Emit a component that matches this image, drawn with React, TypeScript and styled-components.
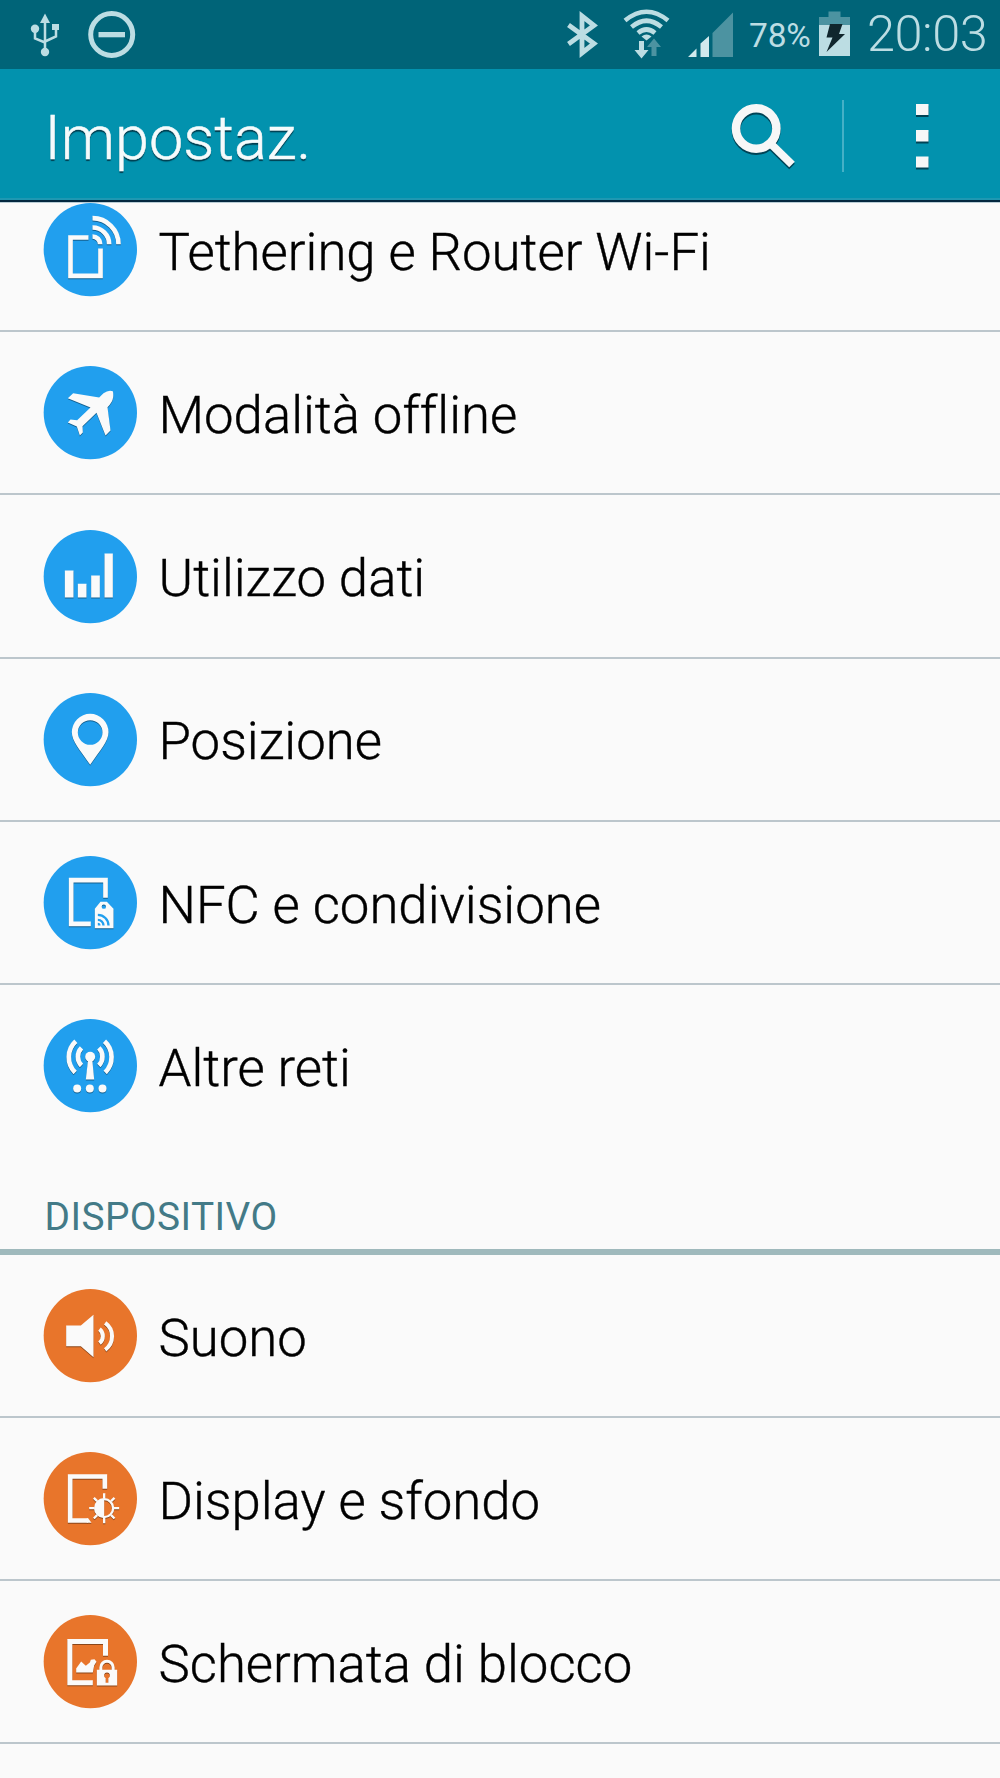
import React from "react";
import styled, { createGlobalStyle } from "styled-components";

const GlobalStyle = createGlobalStyle`
  html, body { margin: 0; padding: 0; background: #fafafa; }
  * { box-sizing: border-box; }
`;

const BLUE = "#219fee";
const ORANGE = "#e8752b";
const STATUS_ICON = "#bcdde3";
const STATUS_DIM = "#4c93a1";

const Screen = styled.div`
  width: 1000px;
  height: 1778px;
  display: flex;
  flex-direction: column;
  overflow: hidden;
  background: #fafafa;
  font-family: Roboto, "Liberation Sans", sans-serif;
  font-weight: 300;
  font-variant-ligatures: none;
`;

const StatusBar = styled.header`
  flex: none;
  height: 69px;
  padding: 0 14px 0 30px;
  display: flex;
  align-items: flex-start;
  justify-content: space-between;
  background: #006478;
`;

const StatusGroup = styled.div`
  display: flex;
  align-items: flex-start;
  height: 69px;
`;

const StatusGlyph = styled.svg<{ $gap?: number }>`
  flex: none;
  display: block;
  margin-right: ${(p) => p.$gap ?? 0}px;
`;

const StatusText = styled.span<{ $size: number; $width: number; $top: number; $weight?: number; $tracking?: number }>`
  width: ${(p) => p.$width}px;
  padding-top: ${(p) => p.$top}px;
  font-size: ${(p) => p.$size}px;
  font-weight: ${(p) => p.$weight ?? 300};
  letter-spacing: ${(p) => p.$tracking ?? 0}px;
  line-height: 1;
  white-space: nowrap;
  color: ${STATUS_ICON};
`;

const ActionBar = styled.div`
  flex: none;
  height: 133.5px;
  padding: 0 0 4px 44.5px;
  display: flex;
  align-items: center;
  background: linear-gradient(#0292ae 0 129.5px, #1f98b2 129.5px 131px, #04283f 131px 133px, #b9cdd6 133px);
`;

const Title = styled.h1`
  flex: 1;
  margin: 0;
  padding-top: 9px;
  font-size: 61.2px;
  line-height: 72px;
  font-weight: 300;
  letter-spacing: 0;
  color: #f5fbfc;
  -webkit-text-stroke: 0.5px #f5fbfc;
  text-shadow: 0 2px 1px rgba(0, 40, 55, 0.8);
`;

const ActionButton = styled.button<{ $width: number }>`
  width: ${(p) => p.$width}px;
  height: 80px;
  padding: 0;
  border: 0;
  display: flex;
  align-items: center;
  justify-content: center;
  background: none;
`;

const ActionGlyph = styled.svg`
  display: block;
  filter: drop-shadow(0 2px 0.5px rgba(0, 40, 55, 0.75));
`;

const ActionDivider = styled.div`
  width: 2.5px;
  height: 72px;
  margin-top: 5px;
  background: #45b0c6;
`;

const Viewport = styled.main`
  flex: 1;
  min-height: 0;
  overflow: hidden;
`;

const Scroller = styled.div<{ $offset: number }>`
  margin-top: -${(p) => p.$offset}px;
  display: flex;
  flex-direction: column;
`;

const Row = styled.div<{ $last?: boolean }>`
  flex: none;
  height: 163.2px;
  padding-left: 43px;
  display: flex;
  align-items: center;
  gap: 20.5px;
  border-bottom: 2px solid ${(p) => (p.$last ? "transparent" : "#bcc6cc")};
`;

const Badge = styled.svg`
  flex: none;
  display: block;
  width: 95px;
  height: 95px;
`;

const Label = styled.span`
  padding-top: 4.4px;
  font-size: 52.7px;
  line-height: 62px;
  white-space: nowrap;
  color: #000;
  -webkit-text-stroke: 0.4px #000;
`;

const SectionHeader = styled.h2`
  flex: none;
  height: 106.5px;
  margin: 0;
  padding: 0 0 9.5px 44.5px;
  display: flex;
  align-items: flex-end;
  border-bottom: 6px solid #9fb9bc;
  font-size: 38.8px;
  line-height: 44px;
  font-weight: 400;
  letter-spacing: 0.45px;
  color: #437a87;
`;

const INK = "#fafafa";

const glyphs: Record<string, (bg: string) => React.ReactNode> = {
  tethering: () => (
    <g fill="none" stroke={INK} strokeWidth="14">
      <path d="M135 104H81V219H171V137" />
      <path d="M147 101a23 23 0 0 1 23 23M147 74a50 50 0 0 1 50 50M147 46a78 78 0 0 1 78 78" />
    </g>
  ),
  plane: () => (
    <path
      fill={INK}
      d="M89 82L73 97L141 125L101 163L81 161L73 170L100 182L109 209L118 200L117 181L159 141L186 209L201 194L192 124Q207 109 209 94Q210 84 208 76Q195 71 180 82L167 95Z"
    />
  ),
  bars: () => <path fill={INK} d="M64 122h26v81h-26zM103 162h26v41h-26zM143 137h26v66h-26zM183 71h25v132h-25z" />,
  pin: () => (
    <path
      fill={INK}
      fillRule="evenodd"
      d="M140 63a55 55 0 0 1 55 55C195 145 171 170 140 216C109 170 85 145 85 118a55 55 0 0 1 55-55zM140 82a37 37 0 1 0 0 74a37 37 0 1 0 0-74z"
    />
  ),
  nfc: (bg) => (
    <>
      <path fill="none" stroke={INK} strokeWidth="14" d="M186 126V73H83V204H142" />
      <path
        fill={INK}
        fillRule="evenodd"
        d="M171 138h19l20 21v58h-56v-58zM181 146a6.5 6.5 0 1 0 0 13a6.5 6.5 0 1 0 0-13z"
      />
      <path fill="none" stroke={bg} strokeWidth="7" d="M163 177a32 32 0 0 1 32 32M163 192a17 17 0 0 1 17 17" />
      <path fill={bg} d="M163 201a8 8 0 0 1 8 8h-8z" />
    </>
  ),
  networks: () => (
    <>
      <circle cx="140" cy="114" r="15" fill={INK} />
      <path fill={INK} d="M134 120h12l6 62h-25z" />
      <path
        fill="none"
        stroke={INK}
        strokeWidth="14"
        d="M114 87A38 38 0 0 0 114 140M166 87A38 38 0 0 1 166 140M97 67A65 65 0 0 0 95 161M183 67A65 65 0 0 1 185 161"
      />
      <g fill={INK}>
        <circle cx="101" cy="209" r="12" />
        <circle cx="139" cy="209" r="12" />
        <circle cx="177" cy="209" r="12" />
      </g>
    </>
  ),
  sound: () => (
    <>
      <path fill={INK} d="M68 110h44L150 78V205L112 172H68z" />
      <path fill="none" stroke={INK} strokeWidth="12" d="M168 121A27 27 0 0 1 168 163M185 102A50 50 0 0 1 185 183" />
    </>
  ),
  display: () => (
    <>
      <path fill="none" stroke={INK} strokeWidth="14" d="M184 111V74H80V206H133" />
      <path fill={INK} d="M130 199h4l10 14h-14z" />
      <circle cx="182" cy="169" r="27" fill="none" stroke={INK} strokeWidth="7" />
      <path fill={INK} d="M182 142a27 27 0 0 0 0 54z" />
      <path
        stroke={INK}
        strokeWidth="7"
        d="M182 140V124M182 198V214M153 169H137M211 169H227M161 148L151 138M203 148L213 138M161 190L151 200M203 190L213 200"
      />
    </>
  ),
  lock: () => (
    <>
      <path fill="none" stroke={INK} strokeWidth="15" d="M186 123V80H79V204H148" />
      <path fill={INK} d="M98 173V161L113 140L127 153L139 143L142 135L153 133L159 141L152 152L148 173z" />
      <path fill="none" stroke={INK} strokeWidth="9" d="M172 167V158a18.5 18.5 0 0 1 37 0V167" />
      <path
        fill={INK}
        fillRule="evenodd"
        d="M160 165h61v47h-61zM190.500 173a9 9 0 0 0-4 17v14h8v-14a9 9 0 0 0-4-17z"
      />
    </>
  ),
};

type Item = { icon: string; label: string };

const networkItems: Item[] = [
  { icon: "tethering", label: "Tethering e Router Wi-Fi" },
  { icon: "plane", label: "Modalità offline" },
  { icon: "bars", label: "Utilizzo dati" },
  { icon: "pin", label: "Posizione" },
  { icon: "nfc", label: "NFC e condivisione" },
  { icon: "networks", label: "Altre reti" },
];

const deviceItems: Item[] = [
  { icon: "sound", label: "Suono" },
  { icon: "display", label: "Display e sfondo" },
  { icon: "lock", label: "Schermata di blocco" },
];

const BadgeInk = styled.g`
  filter: drop-shadow(0 3px 1.5px rgba(0, 0, 0, 0.4));
`;

function SettingRow({ item, color, last }: { item: Item; color: string; last?: boolean }) {
  return (
    <Row $last={last}>
      <Badge viewBox="-1.5 -2.5 285 285">
        <circle cx="140.500" cy="140.500" r="140" fill={color} />
        <BadgeInk>{glyphs[item.icon](color)}</BadgeInk>
      </Badge>
      <Label>{item.label}</Label>
    </Row>
  );
}

export default function App() {
  return (
    <Screen>
      <GlobalStyle />
      <StatusBar>
        <StatusGroup>
          <StatusGlyph width="30" height="69" viewBox="30 0 30 69" $gap={28}>
            <g fill={STATUS_ICON}>
              <path d="M45 13.500L50 23H40z" />
              <circle cx="35" cy="28.700" r="4.200" />
              <path d="M52 24h7v6h-7z" />
              <circle cx="45" cy="52" r="4.200" />
            </g>
            <path
              d="M45 22V50M35 30V38.500L45 42.500M56 29V36.500L45 41.500"
              fill="none"
              stroke={STATUS_ICON}
              strokeWidth="2.500"
            />
          </StatusGlyph>
          <StatusGlyph width="48" height="69" viewBox="88 0 48 69">
            <circle cx="111.700" cy="34.500" r="21" fill="none" stroke={STATUS_ICON} strokeWidth="5" />
            <path d="M98.500 32h26.500v5.300h-26.500z" fill={STATUS_ICON} />
          </StatusGlyph>
        </StatusGroup>
        <StatusGroup>
          <StatusGlyph width="34" height="69" viewBox="566 0 34 69" $gap={22}>
            <path
              d="M568.500 25L594 43.500L582 53V16L594 25.500L568.500 44"
              fill="none"
              stroke={STATUS_ICON}
              strokeWidth="4.800"
            />
          </StatusGlyph>
          <StatusGlyph width="48" height="69" viewBox="622 0 48 69" $gap={18}>
            <g fill="none" stroke={STATUS_ICON} strokeWidth="4.600">
              <path d="M625 20.500Q646.500 3 668 20.500" />
              <path d="M631.500 27Q646.500 14.500 661.500 27" />
              <path d="M638 33Q646.500 26 655 33" />
            </g>
            <path d="M641.500 36.500Q646.500 32.500 651.500 36.500L646.500 40.500z" fill={STATUS_ICON} />
            <path d="M639 41h5v9h4.500L641.500 58.500L634.500 50H639z" fill={STATUS_ICON} />
            <path d="M654 38.500L661 47h-4.500v9h-5v-9H647z" fill={STATUS_DIM} />
          </StatusGlyph>
          <StatusGlyph width="45" height="69" viewBox="688 0 45 69" $gap={16}>
            <path d="M688 57L696.500 48.500V57zM700.500 57V43.500L709 36V57z" fill="#d0e9ed" />
            <path d="M712.500 57V33L733 12.500V57z" fill={STATUS_DIM} />
          </StatusGlyph>
          <StatusText $size={33.5} $width={70} $top={19} $weight={400} $tracking={-0.2}>78%</StatusText>
          <StatusGlyph width="31" height="69" viewBox="819 0 31 69" $gap={17}>
            <path d="M819 17h9.500v-5.500h12V17H850v8H819z" fill={STATUS_DIM} />
            <path d="M819 25h31v31h-31z" fill={STATUS_ICON} />
            <path d="M830 24h12.500L839 34h6L826.500 52L832.500 37.500h-6z" fill="#10262d" />
          </StatusGlyph>
          <StatusText $size={50.5} $width={119} $top={8.5} $tracking={-0.5}>20:03</StatusText>
        </StatusGroup>
      </StatusBar>
      <ActionBar>
        <Title>Impostaz.</Title>
        <ActionButton $width={158} aria-label="Cerca">
          <ActionGlyph width="158" height="80" viewBox="684 94 158 80">
            <circle cx="756.200" cy="128.500" r="20.200" fill="none" stroke="#f7f7f7" strokeWidth="8.500" />
            <path d="M771 144L792 164.500" stroke="#f7f7f7" strokeWidth="8" fill="none" />
          </ActionGlyph>
        </ActionButton>
        <ActionDivider />
        <ActionButton $width={156} aria-label="Altre opzioni">
          <ActionGlyph width="156" height="80" viewBox="844 94 156 80">
            <path d="M916 104h12.500v11h-12.500zM916 130h12.500v11.500h-12.500zM916 156.500h12.500v11h-12.500z" fill="#f7f7f7" />
          </ActionGlyph>
        </ActionButton>
      </ActionBar>
      <Viewport>
        <Scroller $offset={33.4}>
          {networkItems.map((item, i) => (
            <SettingRow key={item.icon} item={item} color={BLUE} last={i === networkItems.length - 1} />
          ))}
          <SectionHeader>DISPOSITIVO</SectionHeader>
          {deviceItems.map((item) => (
            <SettingRow key={item.icon} item={item} color={ORANGE} />
          ))}
        </Scroller>
      </Viewport>
    </Screen>
  );
}
